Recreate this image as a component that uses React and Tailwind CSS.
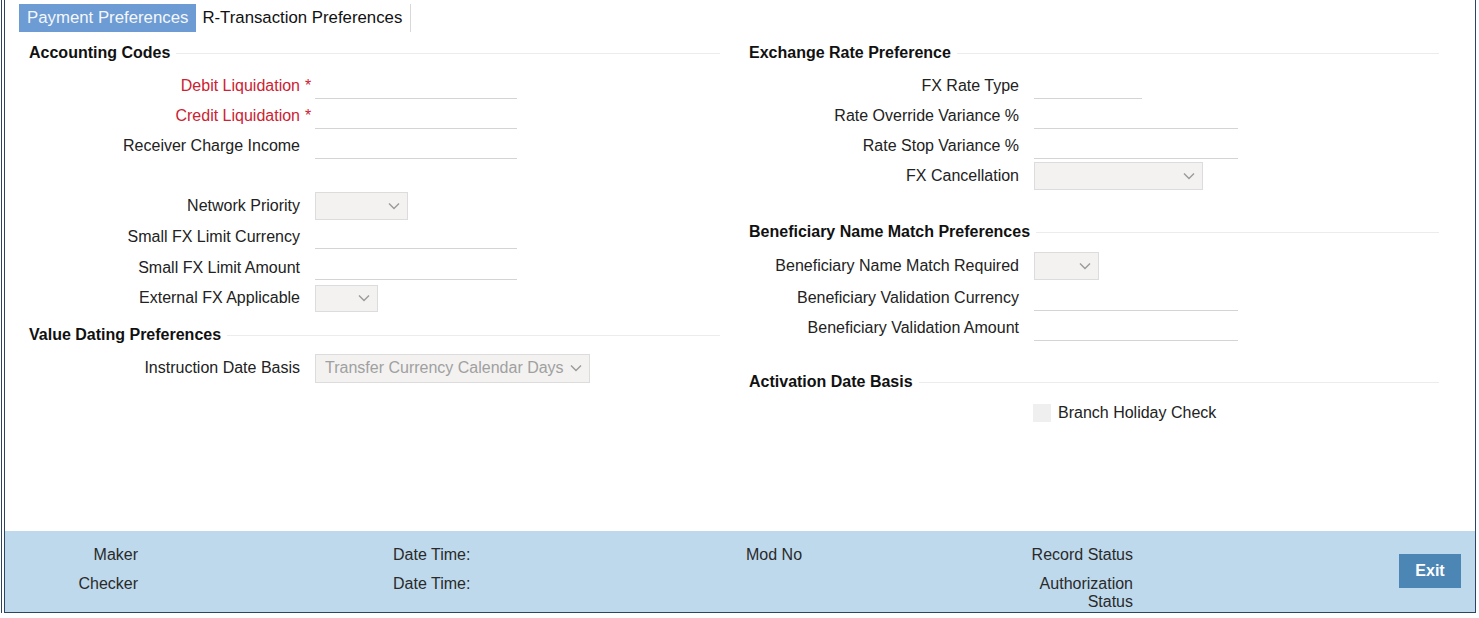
import React from "react";

const Chevron = () => (
  <svg width="12" height="8" viewBox="0 0 12 8" className="shrink-0">
    <path d="M1 1.5 L6 6.5 L11 1.5" fill="none" stroke="#9a9a9a" strokeWidth="1.4" />
  </svg>
);

const Select = ({ w, h = "h-[28px]", text }) => (
  <div className={`${w} ${h} flex items-center justify-between bg-[#f3f2f1] border border-[#dcdcdc] pl-[9px] pr-[7px]`}>
    <span className="text-[#a0a0a0] whitespace-nowrap">{text || ""}</span>
    <Chevron />
  </div>
);

const Input = ({ w }) => <div className={`${w} h-[25px] border-b border-[#d4d4d4]`} />;

const Header = ({ title, cls = "" }) => (
  <div className={`h-[36px] flex items-center ${cls}`}>
    <span className="font-bold text-[#111] whitespace-nowrap">{title}</span>
    <div className="flex-1 h-px bg-[#ececec] ml-[6px]" />
  </div>
);

const Row = ({ label, req, h = "h-[30px]", labelW, children, cls = "" }) => (
  <div className={`${h} flex items-center ${cls}`}>
    <div className={`${labelW} shrink-0 text-right whitespace-nowrap ${req ? "text-[#cc2232]" : "text-[#222]"} relative`}>
      {label}
      {req && <span className="absolute left-full ml-[5px] text-[#cc2232]">*</span>}
    </div>
    <div className="ml-[15px]">{children}</div>
  </div>
);

export default function App() {
  const LW = "w-[271px]";
  const RW = "w-[270px]";
  return (
    <div className="w-[1479px] h-[618px] bg-white overflow-hidden text-[16px] leading-[18px]" style={{ fontFamily: '"Liberation Sans", Arial, sans-serif' }}>
      <div className="ml-[1px] w-[1475px] h-[613px] border-l-[4px] border-double border-r border-[#2d4463] flex flex-col">
        <div className="flex-1 flex flex-col">
          {/* tabs */}
          <div className="flex ml-[14px] mt-[4px] h-[28px] text-[16.8px]">
            <div className="bg-[#6d9bd4] text-[#f4f7fb] px-[8px] flex items-center">Payment Preferences</div>
            <div className="text-[#111] pl-[6px] pr-[8px] flex items-center border-r border-[#d8d8d8]">R-Transaction Preferences</div>
          </div>
          <div className="flex pl-[24px] mt-[3px]">
            {/* left column */}
            <div className="w-[691px] flex flex-col">
              <Header title="Accounting Codes" />
              <Row label="Debit Liquidation" req labelW={LW}><Input w="w-[202px]" /></Row>
              <Row label="Credit Liquidation" req labelW={LW}><Input w="w-[202px]" /></Row>
              <Row label="Receiver Charge Income" labelW={LW}><Input w="w-[202px]" /></Row>
              <div className="h-[29px]" />
              <Row label="Network Priority" h="h-[31px]" labelW={LW}><Select w="w-[93px]" /></Row>
              <Row label="Small FX Limit Currency" h="h-[31px]" labelW={LW}><Input w="w-[202px]" /></Row>
              <Row label="Small FX Limit Amount" h="h-[31px]" labelW={LW}><Input w="w-[202px]" /></Row>
              <Row label="External FX Applicable" labelW={LW}><Select w="w-[63px]" h="h-[27px]" /></Row>
              <Header title="Value Dating Preferences" cls="mt-[4px]" />
              <Row label="Instruction Date Basis" labelW={LW}><Select w="w-[275px]" h="h-[29px]" text="Transfer Currency Calendar Days" /></Row>
            </div>
            {/* right column */}
            <div className="w-[690px] ml-[29px] flex flex-col">
              <Header title="Exchange Rate Preference" />
              <Row label="FX Rate Type" labelW={RW}><Input w="w-[108px]" /></Row>
              <Row label="Rate Override Variance %" labelW={RW}><Input w="w-[204px]" /></Row>
              <Row label="Rate Stop Variance %" labelW={RW}><Input w="w-[204px]" /></Row>
              <Row label="FX Cancellation" labelW={RW}><Select w="w-[169px]" /></Row>
              <Header title="Beneficiary Name Match Preferences" cls="mt-[23px]" />
              <Row label="Beneficiary Name Match Required" h="h-[32px]" cls="mb-[1px]" labelW={RW}><Select w="w-[65px]" /></Row>
              <Row label="Beneficiary Validation Currency" labelW={RW}><Input w="w-[204px]" /></Row>
              <Row label="Beneficiary Validation Amount" labelW={RW}><Input w="w-[204px]" /></Row>
              <Header title="Activation Date Basis" cls="mt-[21px]" />
              <div className="h-[26px] flex items-center">
                <div className={`${RW} shrink-0`} />
                <div className="ml-[14px] flex items-center">
                  <div className="w-[18px] h-[18px] bg-[#efefef]" />
                  <span className="ml-[7px] text-[#222]">Branch Holiday Check</span>
                </div>
              </div>
            </div>
          </div>
        </div>
        {/* footer */}
        <div className="h-[82px] shrink-0 bg-[#bed9ec] border-b border-[#2d4463] flex text-[#2a2a2a] pt-[15px]">
          <div className="w-[133px] shrink-0 text-right">
            <div>Maker</div>
            <div className="mt-[11px]">Checker</div>
          </div>
          <div className="ml-[255px] w-[353px] shrink-0">
            <div>Date Time:</div>
            <div className="mt-[11px]">Date Time:</div>
          </div>
          <div className="w-[200px] shrink-0">
            <div>Mod No</div>
          </div>
          <div className="w-[187px] shrink-0 text-right">
            <div>Record Status</div>
            <div className="mt-[11px]">Authorization<br />Status</div>
          </div>
          <div className="ml-[266px] mt-[8px]">
            <div className="w-[62px] h-[34px] bg-[#4b86b5] text-white font-bold flex items-center justify-center">Exit</div>
          </div>
        </div>
      </div>
    </div>
  );
}
